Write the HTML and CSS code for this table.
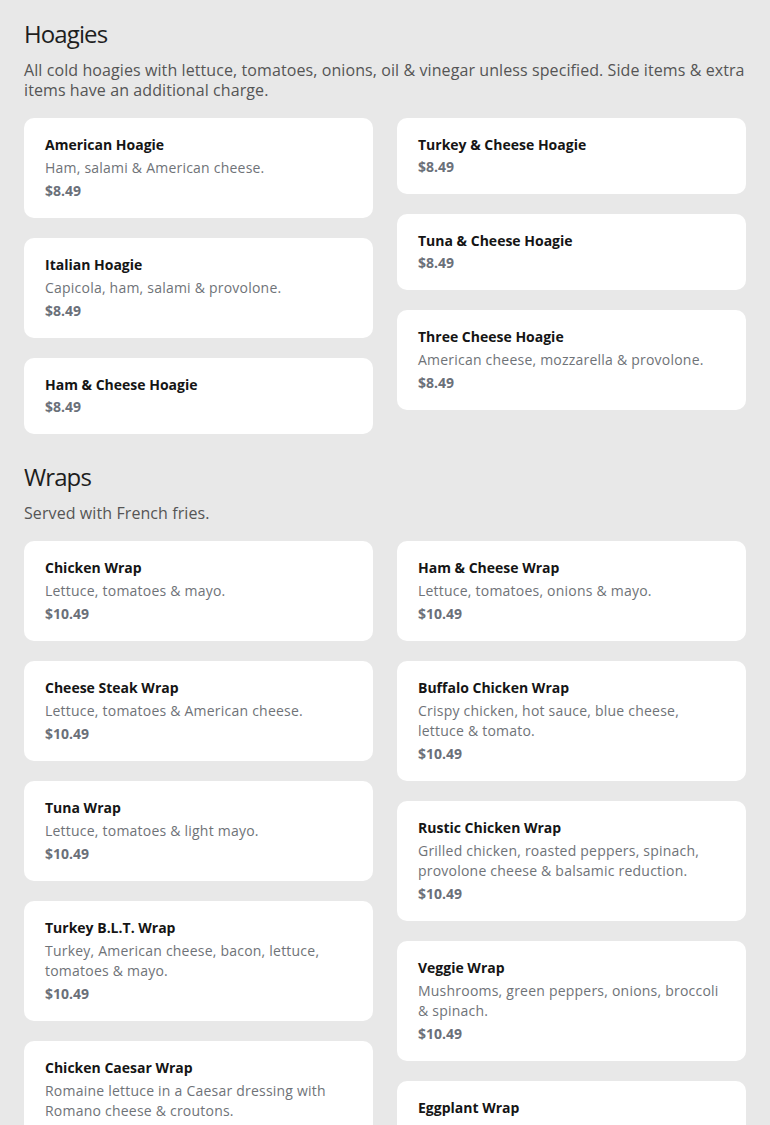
FILE: index.html
```html
<!DOCTYPE html>
<html>
<head>
<meta charset="utf-8">
<link rel="stylesheet" href="styles.css">
</head>
<body>
<main class="menu">
  <section class="section">
    <h2 class="section-title">Hoagies</h2>
    <p class="section-desc">All cold hoagies with lettuce, tomatoes, onions, oil &amp; vinegar unless specified. Side items &amp; extra items have an additional charge.</p>
    <div class="grid">
      <div class="col">
        <div class="card"><div class="name">American Hoagie</div><div class="desc">Ham, salami &amp; American cheese.</div><div class="price">$8.49</div></div>
        <div class="card"><div class="name">Italian Hoagie</div><div class="desc">Capicola, ham, salami &amp; provolone.</div><div class="price">$8.49</div></div>
        <div class="card"><div class="name">Ham &amp; Cheese Hoagie</div><div class="price">$8.49</div></div>
      </div>
      <div class="col">
        <div class="card"><div class="name">Turkey &amp; Cheese Hoagie</div><div class="price">$8.49</div></div>
        <div class="card"><div class="name">Tuna &amp; Cheese Hoagie</div><div class="price">$8.49</div></div>
        <div class="card"><div class="name">Three Cheese Hoagie</div><div class="desc">American cheese, mozzarella &amp; provolone.</div><div class="price">$8.49</div></div>
      </div>
    </div>
  </section>
  <section class="section">
    <h2 class="section-title">Wraps</h2>
    <p class="section-desc">Served with French fries.</p>
    <div class="grid">
      <div class="col">
        <div class="card"><div class="name">Chicken Wrap</div><div class="desc">Lettuce, tomatoes &amp; mayo.</div><div class="price">$10.49</div></div>
        <div class="card"><div class="name">Cheese Steak Wrap</div><div class="desc">Lettuce, tomatoes &amp; American cheese.</div><div class="price">$10.49</div></div>
        <div class="card"><div class="name">Tuna Wrap</div><div class="desc">Lettuce, tomatoes &amp; light mayo.</div><div class="price">$10.49</div></div>
        <div class="card"><div class="name">Turkey B.L.T. Wrap</div><div class="desc">Turkey, American cheese, bacon, lettuce, tomatoes &amp; mayo.</div><div class="price">$10.49</div></div>
        <div class="card"><div class="name">Chicken Caesar Wrap</div><div class="desc">Romaine lettuce in a Caesar dressing with Romano cheese &amp; croutons.</div><div class="price">$10.49</div></div>
      </div>
      <div class="col">
        <div class="card"><div class="name">Ham &amp; Cheese Wrap</div><div class="desc">Lettuce, tomatoes, onions &amp; mayo.</div><div class="price">$10.49</div></div>
        <div class="card"><div class="name">Buffalo Chicken Wrap</div><div class="desc">Crispy chicken, hot sauce, blue cheese, lettuce &amp; tomato.</div><div class="price">$10.49</div></div>
        <div class="card"><div class="name">Rustic Chicken Wrap</div><div class="desc">Grilled chicken, roasted peppers, spinach, provolone cheese &amp; balsamic reduction.</div><div class="price">$10.49</div></div>
        <div class="card"><div class="name">Veggie Wrap</div><div class="desc">Mushrooms, green peppers, onions, broccoli &amp; spinach.</div><div class="price">$10.49</div></div>
        <div class="card"><div class="name">Eggplant Wrap</div><div class="desc">Breaded eggplant, roasted peppers, mozzarella &amp; marinara.</div><div class="price">$10.49</div></div>
      </div>
    </div>
  </section>
</main>
</body>
</html>
```
FILE: styles.css
```css
* { box-sizing: border-box; }
html, body { margin: 0; padding: 0; }
body {
  background: #e8e8e8;
  font-family: "Open Sans", "Liberation Sans", sans-serif;
  color: #1a1a1a;
}
.menu {
  padding: 18px 24px 24px;
  display: flex;
  flex-direction: column;
  gap: 27px;
}
.section-title {
  margin: 0 0 10px;
  font-size: 24px;
  line-height: 32px;
  font-weight: 400;
  letter-spacing: -0.9px;
  color: #1e1e1e;
}
.section-desc {
  margin: 0 0 18px;
  font-size: 16px;
  line-height: 20px;
  letter-spacing: 0.09px;
  color: #555;
}
.grid {
  display: flex;
  gap: 24px;
  align-items: flex-start;
}
.col {
  flex: 1 1 0;
  display: flex;
  flex-direction: column;
  gap: 20px;
  min-width: 0;
}
.card {
  background: #fff;
  border-radius: 10px;
  padding: 17px 21px 17px;
  display: flex;
  flex-direction: column;
}
.name {
  font-size: 14px;
  line-height: 20px;
  font-weight: 700;
  margin-bottom: 2px;
  color: #151515;
}
.desc {
  font-size: 14px;
  line-height: 20px;
  letter-spacing: 0.22px;
  margin: 1px 0 3px;
  color: #6f7378;
}
.price {
  font-size: 14px;
  line-height: 20px;
  font-weight: 700;
  color: #6b7079;
}
```
